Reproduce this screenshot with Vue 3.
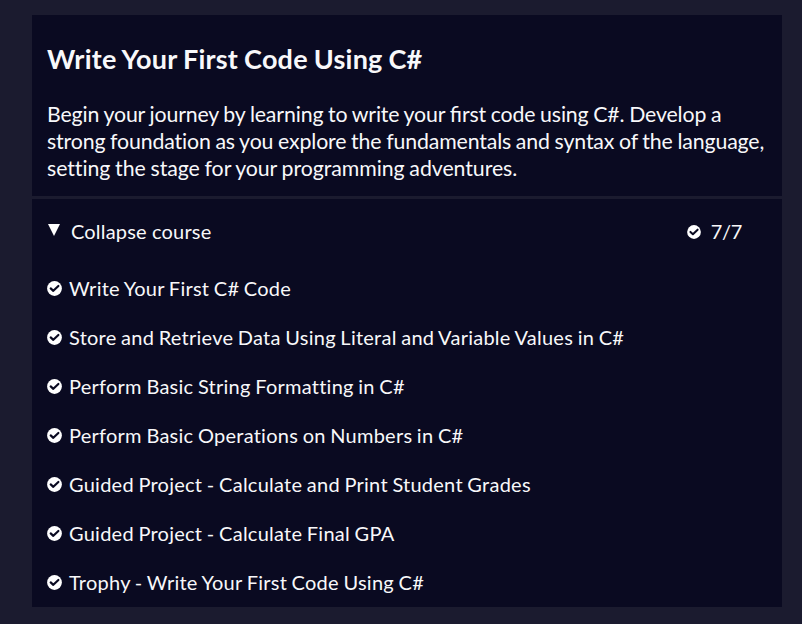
<script setup>
const lessons = [
  'Write Your First C# Code',
  'Store and Retrieve Data Using Literal and Variable Values in C#',
  'Perform Basic String Formatting in C#',
  'Perform Basic Operations on Numbers in C#',
  'Guided Project - Calculate and Print Student Grades',
  'Guided Project - Calculate Final GPA',
  'Trophy - Write Your First Code Using C#',
]
</script>

<template>
  <main class="page">
    <section class="course">
      <header class="intro">
        <h1>Write Your First Code Using C#</h1>
        <p><span class="l1">Begin your journey by learning to write your <span class="lig">fi</span>rst code using C#. Develop a</span><br /><span class="l2">strong foundation as you explore the fundamentals and syntax of the language,</span><br /><span class="l3">setting the stage for your programming adventures.</span></p>
      </header>
      <div class="body">
        <div class="toggle">
          <svg class="arrow" viewBox="0 0 12 12"><path d="M0 0h12L6 12z" /></svg>
          <span class="label">Collapse course</span>
          <svg class="check small" viewBox="0 0 512 512"><circle cx="256" cy="256" r="252" /><path class="tick" d="M126 252l90 84 172-166" /></svg>
          <span class="count">7/7</span>
        </div>
        <ul>
          <li v-for="lesson in lessons" :key="lesson">
            <svg class="check" viewBox="0 0 512 512"><circle cx="256" cy="256" r="252" /><path class="tick" d="M126 252l90 84 172-166" /></svg>
            <span>{{ lesson }}</span>
          </li>
        </ul>
      </div>
    </section>
  </main>
</template>

<style>
body { background: #1b1b2f; }
</style>

<style scoped>
.page {
  box-sizing: border-box;
  height: 624px;
  padding: 15px 20px 17px 32px;
  background: #1b1b2f;
  color: #f8f8fa;
  font-family: Lato, sans-serif;
}
.course { height: 592px; background: #0a0a21; }
.intro {
  box-sizing: border-box;
  height: 184px;
  padding: 26px 15px 0;
  border-bottom: 3px solid #1b1b2f;
}
h1 { margin: 0; font-size: 27px; line-height: 36px; font-weight: 700; letter-spacing: 0.22px; word-spacing: -0.8px; white-space: nowrap; }
p { margin: 24px 0 0; font-size: 21.3px; line-height: 27px; letter-spacing: -0.14px; word-spacing: -0.6px; white-space: nowrap; }
.l3 { letter-spacing: -0.06px; }
.lig { letter-spacing: 0; }
.toggle { display: flex; align-items: center; box-sizing: border-box; height: 64px; padding: 0 40px 0 16px; font-size: 20px; letter-spacing: 0.18px; }
.arrow { width: 12px; height: 12px; margin: 0 11px 2px 0; }
.label { flex: 1; }
svg { fill: #fff; flex: none; }
.tick { fill: none; stroke: #0a0a21; stroke-width: 74; stroke-linecap: round; stroke-linejoin: round; }
.check { width: 15px; height: 15px; margin: 1px 7px 0 0; }
.check.small { width: 14px; height: 14px; margin: 1px 10px 0 0; }
.count { letter-spacing: -0.3px; }
ul { list-style: none; margin: 0; padding: 0 15px; }
li { display: flex; align-items: center; height: 49px; font-size: 20px; letter-spacing: 0.25px; word-spacing: -0.8px; white-space: nowrap; }
</style>
